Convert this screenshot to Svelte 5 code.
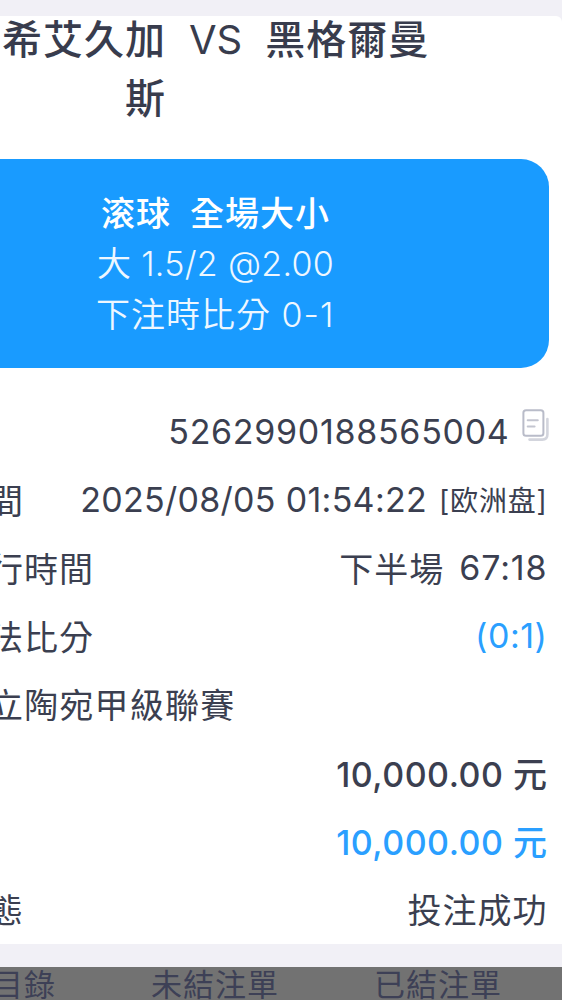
<script>
	const match = ['希艾久加', 'VS', '黑格爾曼']
	const orderId = '5262990188565004'

	const tabs = ['目錄', '未結注單', '已結注單']
</script>

<div class='page'>
	<div class='sheet'>
		<div class='title'>
			<div class='title-line'>
				{#each match as part}
					<span>{part}</span>
				{/each}
			</div>
			<div class='title-rest'>斯</div>
		</div>

		<div class='bet'>
			<div class='bet-type'><span>滚球</span><span>全場大小</span></div>
			<div class='bet-odds'>大 1.5/2 @2.00</div>
			<div class='bet-score'>下注時比分 0-1</div>
		</div>

		<div class='rows'>
			<div class='row'>
				<span class='value order-id'>{orderId}</span>
				<svg class='copy' width='28' height='34' viewBox='0 0 28 34' fill='none' stroke-linecap='round' stroke-linejoin='round'>
					<path d='M25.4 10V25.5Q25.4 30.6 20.3 30.6H7.5' stroke='#d3d5dd' stroke-width='2.6'/>
					<rect x='1.4' y='1.2' width='20' height='25.6' rx='2.6' stroke='#b9bcc9' stroke-width='2'/>
					<path d='M5.7 11.2H15.8M5.7 17.5H12.6' stroke='#c3c5d0' stroke-width='2'/>
				</svg>
			</div>
			<div class='row'>
				<span class='label single'>間</span>
				<span class='value time'>2025/08/05 01:54:22</span>
				<span class='market'>[欧洲盘]</span>
			</div>
			<div class='row'>
				<span class='label'>行時間</span>
				<span class='value half'>下半場</span>
				<span class='value clock'>67:18</span>
			</div>
			<div class='row'>
				<span class='label'>法比分</span>
				<span class='value blue score'>(0:1)</span>
			</div>
			<div class='row'>
				<span class='label league'>立陶宛甲級聯賽</span>
			</div>
			<div class='row'>
				<span class='value money'>10,000.00 元</span>
			</div>
			<div class='row'>
				<span class='value money blue'>10,000.00 元</span>
			</div>
			<div class='row'>
				<span class='label single'>態</span>
				<span class='value status'>投注成功</span>
			</div>
		</div>
	</div>

	<div class='tabs'>
		{#each tabs as tab}
			<span class='tab'>{tab}</span>
		{/each}
	</div>
</div>

<style>
	:global(body) {
		margin: 0;
		overflow: hidden;
	}
	.page {
		box-sizing: border-box;
		width: 562px;
		height: 1000px;
		padding-top: 16px;
		overflow: hidden;
		background-color: #f1f0f6;
		color: #3b3f50;
		font-family: Inter, "Noto Sans CJK TC", sans-serif;
		font-size: 34px;
		white-space: nowrap;
	}
	.sheet {
		box-sizing: border-box;
		height: 928px;
		background-color: #fff;
		border-top-right-radius: 6px;
	}
	.title {
		display: flow-root;
		height: 143px;
		font-size: 40px;
		font-weight: 500;
		line-height: 59px;
		letter-spacing: 1px;
		color: #383c4d;
	}
	.title-line {
		display: flex;
		gap: 23px;
		height: 59px;
		margin-top: -6px;
		margin-left: 2px;
	}
	.title-line span:nth-child(2) {
		font-weight: 400;
		letter-spacing: 0;
	}
	.title-rest {
		padding-left: 125px;
	}
	.bet {
		box-sizing: border-box;
		width: 549px;
		height: 209px;
		padding-top: 30px;
		border-radius: 0 28px 28px 0;
		background-color: #199bff;
		color: #fff;
		line-height: 50.4px;
	}
	.bet-type {
		display: flex;
		gap: 19px;
		padding-left: 101px;
		font-weight: 500;
		letter-spacing: 1px;
	}
	.bet-odds, .bet-score {
		color: #eef7ff;
		font-weight: 350;
	}
	.bet-odds {
		padding-left: 97px;
		letter-spacing: 0.3px;
	}
	.bet-score {
		padding-left: 96px;
		letter-spacing: 1px;
	}
	.rows {
		padding: 29px 14.5px 0 0;
	}
	.row {
		display: flex;
		align-items: center;
		justify-content: flex-end;
		height: 68.2px;
	}
	.label {
		margin-left: -11px;
		margin-right: auto;
		letter-spacing: 1px;
	}
	.league {
		letter-spacing: 1.2px;
	}
	.value {
		letter-spacing: 0.5px;
	}
	.order-id {
		letter-spacing: 0.7px;
	}
	.time {
		letter-spacing: 0.3px;
	}
	.copy {
		flex: none;
		margin: -10px -2px 0 12px;
	}
	.market {
		margin-left: 12px;
		font-family: Inter, "Noto Sans CJK SC", sans-serif;
		font-size: 28px;
		letter-spacing: 0.8px;
	}
	.clock {
		margin-left: 15px;
		letter-spacing: 0.9px;
	}
	.money {
		font-weight: 500;
	}
	.half, .status {
		letter-spacing: 1px;
	}
	.blue {
		color: #2a9fff;
	}
	.tabs {
		display: flex;
		height: 33px;
		margin-top: 23px;
		background-color: #727272;
		color: #3d4056;
		font-size: 31px;
		line-height: 36px;
		letter-spacing: 1px;
	}
	.tab:first-child {
		width: 159px;
		margin-left: -8px;
	}
	.tab:nth-child(2) {
		width: 223px;
	}
</style>
